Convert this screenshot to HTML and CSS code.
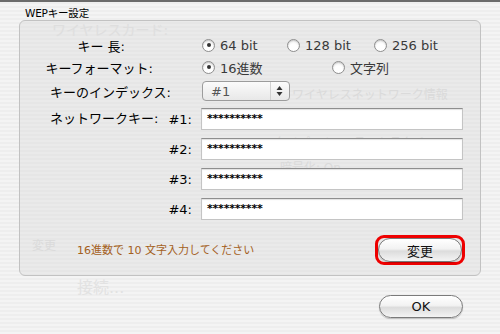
FILE: index.html
```html
<!DOCTYPE html>
<html lang="ja">
<head>
  <meta charset="UTF-8">
  <title>WEPキー設定</title>
  <link rel="stylesheet" href="styles.css">
</head>
<body>

<div class="sheet">
  <!-- faint text of the window behind the sheet -->
  <div class="ghosts">
    <span class="ghost" style="left:52px;top:20px">ワイヤレスカード:</span>
    <span class="ghost small" style="left:292px;top:85px">ワイヤレスネットワーク情報</span>
    <span class="ghost small" style="left:274px;top:133px">タイプ: インフラストラクチャ</span>
    <span class="ghost small" style="left:280px;top:158px">暗号化: On</span>
    <span class="ghost small" style="left:32px;top:236px">変更</span>
    <span class="ghost big" style="left:77px;top:278px">接続...</span>
  </div>

  <div class="title">WEPキー設定</div>

  <div class="group">
    <div class="row row-len">
      <div class="label pad-len">キー 長:</div>
      <div class="options">
        <label class="radio w-85"><span class="dot on"></span>64 bit</label>
        <label class="radio w-87"><span class="dot"></span>128 bit</label>
        <label class="radio"><span class="dot"></span>256 bit</label>
      </div>
    </div>

    <div class="row row-fmt">
      <div class="label pad-fmt">キーフォーマット:</div>
      <div class="options">
        <label class="radio w-130"><span class="dot on"></span>16進数</label>
        <label class="radio"><span class="dot"></span>文字列</label>
      </div>
    </div>

    <div class="row row-idx">
      <div class="label pad-idx">キーのインデックス:</div>
      <div class="popup">
        <span class="popup-text">#1</span>
        <span class="popup-arrows">
          <svg width="7" height="12" viewBox="0 0 7 12"><path d="M3.5 1 L6.5 5 L0.5 5 Z M3.5 11 L6.5 7 L0.5 7 Z" fill="#333"/></svg>
        </span>
      </div>
    </div>

    <div class="keys">
      <div class="keys-title">ネットワークキー:</div>
      <div class="key-list">
        <div class="key"><span class="key-num">#1:</span><div class="field">**********</div></div>
        <div class="key"><span class="key-num">#2:</span><div class="field">**********</div></div>
        <div class="key"><span class="key-num">#3:</span><div class="field">**********</div></div>
        <div class="key"><span class="key-num">#4:</span><div class="field">**********</div></div>
      </div>
    </div>

    <div class="footer">
      <div class="hint">16進数で 10 文字入力してください</div>
      <div class="focus-ring"><button class="aqua-btn">変更</button></div>
    </div>
  </div>

  <div class="actions">
    <button class="aqua-btn ok">OK</button>
  </div>
</div>

</body>
</html>
```

FILE: styles.css
```css
body { margin: 0; font-family: "DejaVu Sans", "Noto Sans CJK JP", sans-serif; color: #000; }
.sheet { position: relative; width: 500px; height: 334px; border-top: 2px solid #6b6b6b; box-sizing: border-box;
  background: repeating-linear-gradient(#eeeeee 0 2px, #f4f4f4 2px 4px); overflow: hidden; }
.ghosts { position: absolute; inset: 0; z-index: 0; pointer-events: none; }
.ghost { position: absolute; font-size: 14px; line-height: 16px; color: #e2e2e2; white-space: nowrap; }
.ghost.small { font-size: 12px; color: #dcdcdc; }
.ghost.big { font-size: 16px; }
.title { position: relative; z-index: 1; font-size: 10.5px; padding: 3px 0 0 25px; height: 15px; letter-spacing: -0.2px; }
.group { position: relative; z-index: 1; margin-left: 19px; width: 462px; height: 256px; box-sizing: border-box;
  border: 1px solid #c2c2c2; border-radius: 6px; background: rgba(214, 214, 214, 0.35); padding-top: 14px; }
.row { display: flex; align-items: center; height: 20px; }
.row-fmt { margin-top: 2px; }
.row-idx { margin-top: 4px; }
.label { width: 172px; box-sizing: border-box; text-align: right; font-size: 13px; white-space: nowrap; }
.pad-len { padding-right: 67px; }
.pad-fmt { padding-right: 39px; }
.pad-idx { padding-right: 21px; }
.options { display: flex; margin-left: 10px; }
.radio { display: flex; align-items: center; font-size: 13px; color: #3a3a3a; white-space: nowrap; }
.w-85 { width: 85px; }
.w-87 { width: 87px; }
.w-130 { width: 130px; }
.dot { width: 11px; height: 11px; border: 1px solid #8f8f8f; border-radius: 50%; margin-right: 5px; position: relative;
  background: radial-gradient(circle at 50% 70%, #ffffff 0 40%, #e2e2e2 100%); box-shadow: inset 0 1px 1px rgba(0,0,0,0.15); }
.dot.on::after { content: ""; position: absolute; left: 3.5px; top: 3.5px; width: 4px; height: 4px; border-radius: 50%; background: #333; }
.popup { margin-left: 10px; width: 88px; height: 20px; box-sizing: border-box; border: 1px solid #9c9c9c; border-radius: 4px;
  background: linear-gradient(#fbfbfb, #e8e8e8); display: flex; align-items: center; justify-content: space-between; }
.popup-text { font-size: 13px; color: #555; padding-left: 8px; }
.popup-arrows { display: flex; align-items: center; height: 100%; padding: 0 6px 0 5px; border-left: 1px solid #d0d0d0; }
.keys { display: flex; margin-top: 7px; }
.keys-title { width: 135px; box-sizing: border-box; padding-left: 30px; font-size: 13px; white-space: nowrap; height: 22px; line-height: 22px; }
.key-list { display: flex; flex-direction: column; gap: 8px; }
.key { display: flex; align-items: center; height: 22px; }
.key-num { width: 37px; text-align: right; font-size: 13px; margin-right: 9px; }
.field { width: 262px; height: 22px; box-sizing: border-box; background: #fff; border: 1px solid #c4c4c4; border-top-color: #8e8e8e;
  box-shadow: inset 0 1px 1px rgba(0,0,0,0.12); font-size: 11px; font-weight: bold; line-height: 20px; padding-left: 5px; letter-spacing: -0.2px; }
.footer { display: flex; align-items: flex-start; justify-content: space-between; margin-top: 15px; padding: 0 15px 0 57px; }
.hint { font-size: 11px; color: #a4601c; margin-top: 6px; }
.focus-ring { border: 3px solid #ee0000; border-radius: 9px; padding: 0; }
.aqua-btn { display: block; width: 84px; height: 24px; border: 1px solid #7a7a7a; border-radius: 12px; font-family: inherit; font-size: 13px; color: #111;
  background: linear-gradient(#ffffff 0%, #f2f2f2 45%, #dcdcdc 55%, #f4f4f4 100%); box-shadow: 0 1px 1px rgba(0,0,0,0.2); padding: 0; }
.actions { display: flex; justify-content: flex-end; padding: 19px 37px 0 0; }
.ok { height: 23px; width: 84px; }
```
